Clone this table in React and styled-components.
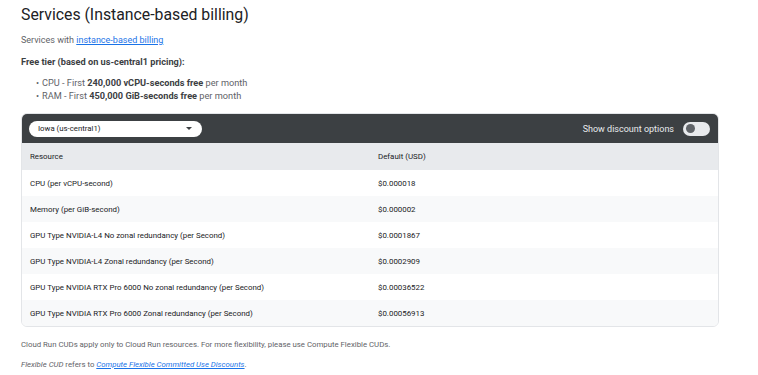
import styled, { createGlobalStyle } from 'styled-components'

const GlobalStyle = createGlobalStyle`
  body {
    margin: 0;
    background: #fff;
    font-family: Roboto, "Liberation Sans", sans-serif;
    color: #3c4043;
  }
`

const Page = styled.div`
  padding: 4px 39px 0 21px;
`

const Title = styled.h1`
  margin: 0;
  font-weight: 400;
  font-size: 15.8px;
  line-height: 22px;
  color: #202124;
`

const Intro = styled.p`
  margin: 7px 0 0;
  font-size: 9px;
  line-height: 14px;
  color: #5f6368;
`

const Link = styled.a`
  color: #1a73e8;
  text-decoration: underline;
`

const TierTitle = styled.p`
  margin: 8px 0 0;
  font-size: 9.2px;
  line-height: 14px;
  font-weight: 700;
  color: #3c4043;
`

const List = styled.ul`
  margin: 7px 0 0;
  padding-left: 21px;
  list-style: none;
  font-size: 9.2px;
  color: #5f6368;
  li {
    height: 13px;
    line-height: 13px;
  }
  li::before {
    content: '•';
    display: inline-block;
    width: 6px;
    margin-left: -6px;
  }
  b {
    color: #3c4043;
  }
`

const Card = styled.div`
  margin-top: 11px;
  border: 1px solid #e3e5e8;
  border-radius: 6px;
  overflow: hidden;
`

const Toolbar = styled.div`
  display: flex;
  align-items: center;
  justify-content: space-between;
  height: 29px;
  padding: 0 8px 0 7px;
  background: #3c4043;
`

const Select = styled.div`
  display: flex;
  align-items: center;
  justify-content: space-between;
  width: 173px;
  height: 16px;
  box-sizing: border-box;
  padding: 0 10px 0 9px;
  background: #fff;
  border-radius: 8px;
  font-size: 7.8px;
  color: #202124;
`

const Caret = styled.span`
  width: 0;
  height: 0;
  border-left: 3px solid transparent;
  border-right: 3px solid transparent;
  border-top: 3px solid #3c4043;
`

const SwitchLabel = styled.label`
  display: flex;
  align-items: center;
  gap: 9px;
  font-size: 9px;
  color: #e8eaed;
`

const Track = styled.span`
  display: flex;
  align-items: center;
  width: 27px;
  height: 14px;
  box-sizing: border-box;
  padding: 0 3px;
  border-radius: 7px;
  background: #e8eaed;
`

const Knob = styled.span`
  width: 9px;
  height: 9px;
  border-radius: 50%;
  background: #5f6368;
`

const Row = styled.div`
  display: grid;
  grid-template-columns: 1fr 1fr;
  align-items: center;
  height: ${(props) => (props.head ? '27px' : '26px')};
  background: ${(props) =>
    props.head ? '#e8eaed' : props.shade ? '#f8f9fa' : '#fff'};
  font-size: 7.9px;
  color: #202124;
`

const Cell = styled.div`
  padding-left: 8px;
`

const Note = styled.p`
  margin: ${(props) => props.top || '0'} 0 0;
  font-size: 7.8px;
  line-height: 12px;
  color: #5f6368;
`

const rows = [
  ['CPU (per vCPU-second)', '$0.000018'],
  ['Memory (per GiB-second)', '$0.000002'],
  ['GPU Type NVIDIA-L4 No zonal redundancy (per Second)', '$0.0001867'],
  ['GPU Type NVIDIA-L4 Zonal redundancy (per Second)', '$0.0002909'],
  ['GPU Type NVIDIA RTX Pro 6000 No zonal redundancy (per Second)', '$0.00036522'],
  ['GPU Type NVIDIA RTX Pro 6000 Zonal redundancy (per Second)', '$0.00056913'],
]

const App = () => {
  return (
    <Page>
      <GlobalStyle />
      <Title>Services (Instance-based billing)</Title>
      <Intro>
        Services with <Link href="#">instance-based billing</Link>
      </Intro>
      <TierTitle>Free tier (based on us-central1 pricing):</TierTitle>
      <List>
        <li>
          CPU - First <b>240,000 vCPU-seconds free</b> per month
        </li>
        <li>
          RAM - First <b>450,000 GiB-seconds free</b> per month
        </li>
      </List>
      <Card>
        <Toolbar>
          <Select>
            Iowa (us-central1)
            <Caret />
          </Select>
          <SwitchLabel>
            Show discount options
            <Track>
              <Knob />
            </Track>
          </SwitchLabel>
        </Toolbar>
        <Row head>
          <Cell>Resource</Cell>
          <Cell>Default (USD)</Cell>
        </Row>
        {rows.map(([name, price], i) => (
          <Row key={name} shade={i % 2 === 1}>
            <Cell>{name}</Cell>
            <Cell>{price}</Cell>
          </Row>
        ))}
      </Card>
      <Note top="12px">
        Cloud Run CUDs apply only to Cloud Run resources. For more flexibility,
        please use Compute Flexible CUDs.
      </Note>
      <Note top="8px">
        <i>Flexible CUD</i> refers to{' '}
        <Link href="#">
          <i>Compute Flexible Committed Use Discounts</i>
        </Link>
        .
      </Note>
    </Page>
  )
}

export default App
